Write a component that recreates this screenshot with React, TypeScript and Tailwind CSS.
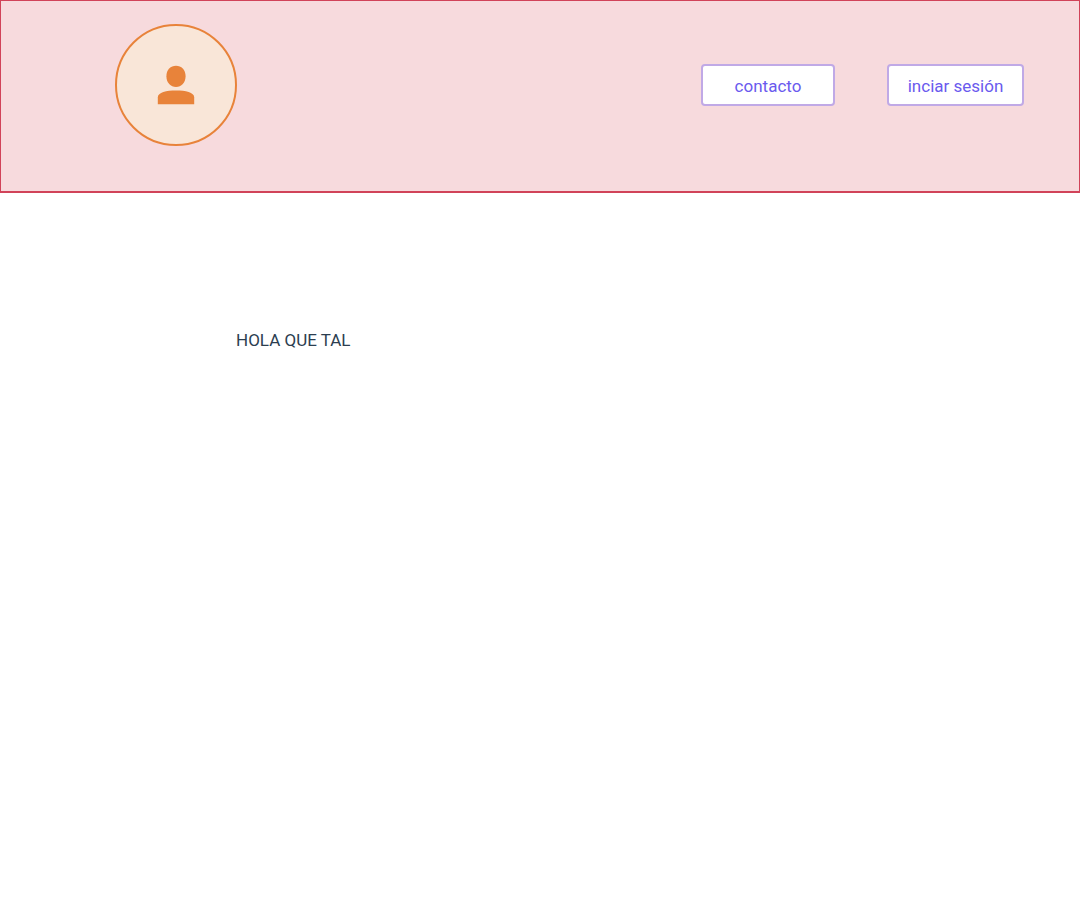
const navButton =
  "h-[42px] rounded-[4px] border-2 border-[#c0a9e6] bg-white pt-px text-center text-[17px] leading-6 text-[#6a5aee]";

function Avatar() {
  return (
    <div className="flex size-[122px] items-center justify-center rounded-full border-2 border-[#e8833a] bg-[#f9e6d8]">
      <svg
        viewBox="0 0 38 40"
        className="h-10 w-[38px] fill-[#e8833a]"
        role="img"
        aria-label="Usuario"
      >
        <path d="M19 0.7C24.3 0.7 28.6 4.6 28.6 11.2S24.3 21.9 19 21.9S9.4 17.8 9.4 11.2S13.7 0.7 19 0.7Z" />
        <path d="M0.8 39.3V32.4C0.8 27.4 9.5 25.6 19 25.6S37.2 27.4 37.2 32.4V39.3Z" />
      </svg>
    </div>
  );
}

export default function App() {
  return (
    <div className="min-h-screen bg-white font-['Roboto','Liberation_Sans',sans-serif]">
      <header className="flex items-start justify-between border border-b-2 border-[#d14359] bg-[#f7dadd] pt-[23px] pr-[55px] pb-[45px] pl-[114px]">
        <Avatar />
        <nav className="mt-10 flex gap-[52px]">
          <button type="button" className={`${navButton} w-[134px]`}>
            contacto
          </button>
          <button type="button" className={`${navButton} w-[137px]`}>
            inciar sesión
          </button>
        </nav>
      </header>
      <main className="pt-[135px] pl-[236px]">
        <p className="text-[17px] leading-6 text-[#2c3e50]">HOLA QUE TAL</p>
      </main>
    </div>
  );
}
